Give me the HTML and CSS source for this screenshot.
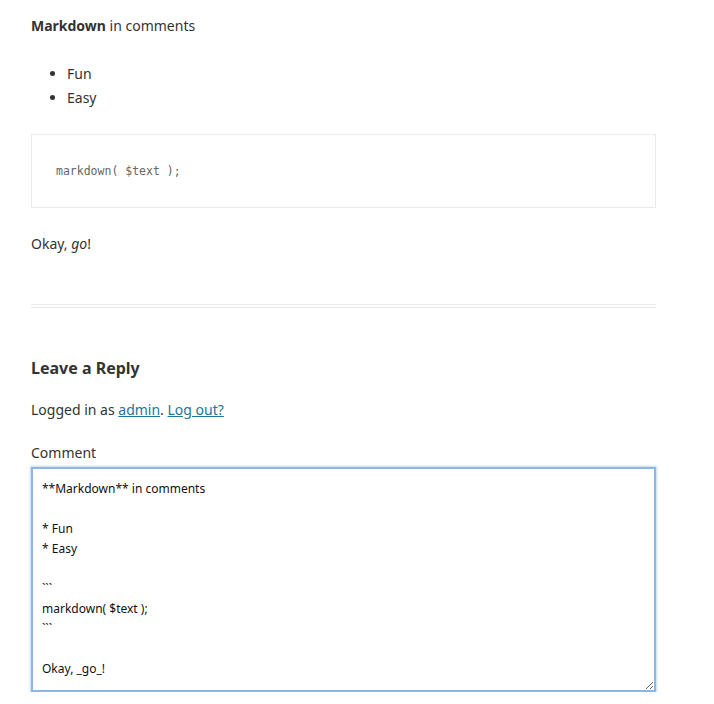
FILE: index.html
```html
<!DOCTYPE html>
<html>
<head>
<meta charset="utf-8">
<link rel="stylesheet" href="styles.css">
</head>
<body>
<div class="page">
  <div class="entry">
    <p><strong>Markdown</strong> in comments</p>
    <ul class="list">
      <li>Fun</li>
      <li>Easy</li>
    </ul>
    <pre class="code">markdown( $text );</pre>
    <p>Okay, <em>go</em>!</p>
  </div>
  <hr class="sep">
  <div class="respond">
    <h3 class="reply-title">Leave a Reply</h3>
    <p class="logged">Logged in as <a href="#">admin</a>. <a href="#">Log out?</a></p>
    <label class="label" for="comment">Comment</label>
    <textarea id="comment" class="comment">**Markdown** in comments

* Fun
* Easy

&#96;&#96;&#96;
markdown( $text );
&#96;&#96;&#96;

Okay, _go_!</textarea>
  </div>
</div>
</body>
</html>
```
FILE: styles.css
```css
html, body {
  margin: 0;
  padding: 0;
  background: #fff;
}
body {
  font-family: "Noto Sans", "Open Sans", sans-serif;
  font-size: 14px;
  line-height: 24px;
  color: #333;
}
.page {
  width: 625px;
  padding: 14px 0 0 31px;
}
p {
  margin: 0 0 24px;
}
.list {
  margin: 0 0 24px;
  padding: 0 0 0 36px;
}
.list li {
  line-height: 24px;
}
.code {
  margin: 0 0 24px;
  padding: 24px;
  border: 1px solid #eaeaea;
  font-family: "DejaVu Sans Mono", monospace;
  font-size: 11.5px;
  line-height: 24px;
  color: #666;
}
.sep {
  margin: 48px 0 0;
  height: 2px;
  border: 0;
  border-top: 1px solid #eaeaea;
  border-bottom: 1px solid #eaeaea;
  padding: 0;
}
.reply-title {
  margin: 48px 0 18px;
  font-size: 16px;
  line-height: 24px;
  font-weight: 700;
}
.logged {
  margin: 0 0 19px;
}
.logged a {
  color: #21759b;
  text-decoration: underline;
}
.label {
  display: block;
  line-height: 24px;
  margin-bottom: 2px;
}
.comment {
  display: block;
  box-sizing: border-box;
  width: 625px;
  height: 225px;
  margin: 0;
  padding: 10px 9px;
  border: 2px solid #8db6e6;
  box-shadow: 0 0 2px 1px #c3daf3;
  outline: none;
  font-family: "Noto Sans", "Open Sans", sans-serif;
  font-size: 12px;
  line-height: 20px;
  letter-spacing: 0;
  color: #111;
  background: #fff;
  resize: both;
}
```
